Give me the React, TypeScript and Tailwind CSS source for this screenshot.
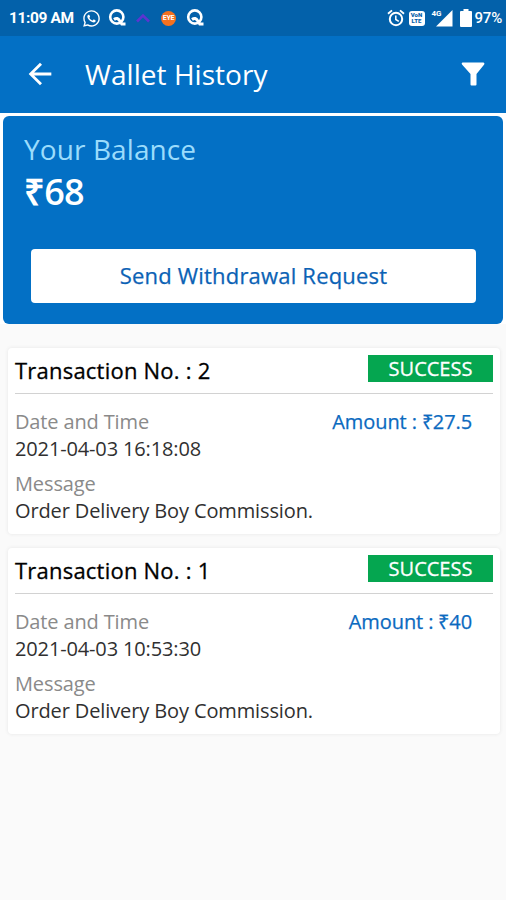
import { FaWhatsapp } from "react-icons/fa";
import { MdArrowBack } from "react-icons/md";

const transactions = [
  {
    id: 2,
    status: "SUCCESS",
    date: "2021-04-03 16:18:08",
    amount: "27.5",
    message: "Order Delivery Boy Commission.",
  },
  {
    id: 1,
    status: "SUCCESS",
    date: "2021-04-03 10:53:30",
    amount: "40",
    message: "Order Delivery Boy Commission.",
  },
];

function QIcon() {
  return (
    <svg width="18" height="18" viewBox="0 0 18 18" fill="none" stroke="white">
      <circle cx="8.8" cy="8" r="6.6" strokeWidth="2.6" />
      <path d="M6 10.500c2.500-1.800 4.300-1 5.500 1l2.300 3.500H17.500" strokeWidth="3" />
    </svg>
  );
}

function AlarmIcon() {
  return (
    <svg width="18" height="18" viewBox="0 0 18 18" fill="none" stroke="white">
      <circle cx="9" cy="10" r="6.200" strokeWidth="2" />
      <path d="M8.800 6.500v4l3 1.800" strokeWidth="1.500" />
      <path d="M1 4.800L5 1.400M17 4.800L13 1.400" strokeWidth="1.900" />
    </svg>
  );
}

function StatusBar() {
  return (
    <div className="flex h-9 items-center bg-[#0361aa] pl-[9px] pr-1 text-white">
      <span className="w-[65px] whitespace-nowrap font-['Roboto'] text-[15.500px] font-bold leading-9 tracking-[-0.4px]">
        11:09 AM
      </span>
      <FaWhatsapp className="ml-2 size-[19px]" />
      <div className="ml-[7px]">
        <QIcon />
      </div>
      <svg className="ml-[10px]" width="14" height="10" viewBox="0 0 14 10">
        <path d="M1 8.500L7 2.500l6 6" fill="none" stroke="#5b35d0" strokeWidth="2.600" />
      </svg>
      <span className="ml-[11px] flex size-[15px] items-center justify-center rounded-full bg-[#f4711f] font-['Roboto'] text-[7px] font-bold tracking-[-0.3px]">
        EYE
      </span>
      <div className="ml-[10px]">
        <QIcon />
      </div>

      <div className="ml-auto flex items-center">
        <AlarmIcon />
        <span className="ml-1 flex h-[15px] w-[16px] flex-col items-center justify-center rounded-[3px] bg-white font-['Roboto'] text-[6px] font-black leading-[6px] text-[#0361aa]">
          <span>VoN</span>
          <span>LTE</span>
        </span>
        <span className="relative ml-[7px]">
          <svg width="21" height="17" viewBox="0 0 21 17">
            <path d="M20.500 0v16.500H4z" fill="white" />
          </svg>
          <span className="absolute left-0 top-0 font-['Roboto'] text-[8px] font-bold leading-[7px]">
            4G
          </span>
        </span>
        <svg className="ml-[7px]" width="12" height="18" viewBox="0 0 12 18">
          <path d="M3.500 0h5v2H11q1 0 1 1v14q0 1-1 1H1q-1 0-1-1V3q0-1 1-1h2.500z" fill="white" />
        </svg>
        <span className="ml-[3px] font-['Roboto'] text-[15px] font-medium tracking-[-0.2px]">
          97%
        </span>
      </div>
    </div>
  );
}

export default function App() {
  return (
    <div className="min-h-[900px] bg-[#fafafa] font-['Open_Sans',sans-serif]">
      <StatusBar />

      <header className="flex h-[77px] items-center bg-[#0370c5] pl-[23px] pr-[21px] text-white">
        <MdArrowBack className="mb-[2px] size-[34px]" />
        <h1 className="mb-[2px] ml-7 text-[28px] leading-10 tracking-[0.05px]">
          Wallet History
        </h1>
        <svg className="mb-[2px] ml-auto" width="24" height="24" viewBox="0 0 24 24">
          <path
            d="M1.500 .5h21q1.500 .3 .7 2L15.500 12v10.500q0 1-1 1h-4q-1 0-1-1V12L1 2.500Q0 .8 1.500 .5z"
            fill="white"
          />
        </svg>
      </header>

      <div className="bg-white px-[3px] pt-[3px]">
        <section className="h-52 rounded-md bg-[#0370c5] px-[21px] pt-[14px]">
          <p className="text-[28px] leading-[38px] tracking-[0.1px] text-[#9bdcfc]">
            Your Balance
          </p>
          <p className="pt-px text-[36px] font-semibold leading-[46px] tracking-[-0.8px] text-white">
            ₹68
          </p>
          <button className="mx-[7px] mt-[34px] block h-[54px] w-[445px] rounded bg-white pb-px text-[22px] tracking-[0.2px] text-[#0b62b5] [-webkit-text-stroke:0.25px]">
            Send Withdrawal Request
          </button>
        </section>
      </div>

      <main className="flex flex-col gap-[14px] pl-2 pr-[6px] pt-6">
        {transactions.map((item) => (
          <article
            key={item.id}
            className="h-[186px] rounded bg-white px-[7px] pt-[7px] shadow-[0_0_3px_1px_#eeeeee]"
          >
            <div className="flex items-start border-b border-[#d2d2d2] pb-2">
              <h2 className="text-[22px] leading-[30px] tracking-[0.22px] text-black [-webkit-text-stroke:0.3px]">
                Transaction No. : {item.id}
              </h2>
              <span className="ml-auto h-[27px] w-[125px] bg-[#05a650] text-center text-[20px] leading-[27px] text-white [-webkit-text-stroke:0.3px]">
                {item.status}
              </span>
            </div>
            <div className="flex justify-between pr-[21px] pt-[14px] text-[20px] leading-[27px]">
              <div className="tracking-[-0.14px]">
                <p className="text-[#8a8a8a]">Date and Time</p>
                <p className="text-[#303030]">{item.date}</p>
              </div>
              <p className="tracking-[-0.1px] text-[#0b6abf] [-webkit-text-stroke:0.25px]">
                Amount : ₹{item.amount}
              </p>
            </div>
            <div className="pt-2 text-[20px] leading-[27px] tracking-[-0.12px]">
              <p className="text-[#8a8a8a]">Message</p>
              <p className="text-[#303030]">{item.message}</p>
            </div>
          </article>
        ))}
      </main>
    </div>
  );
}
